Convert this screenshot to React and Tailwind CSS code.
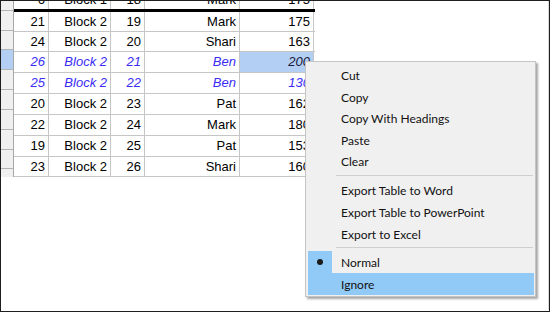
import React from "react";

const rows = [
  { h: "h-[19px]", c: ["21", "Block 2", "19", "Mark", "175"] },
  { h: "h-[19px]", c: ["24", "Block 2", "20", "Shari", "163"] },
  { h: "h-[20px]", c: ["26", "Block 2", "21", "Ben", "200"], sel: true, blue: true },
  { h: "h-[20px]", c: ["25", "Block 2", "22", "Ben", "130"], blue: true },
  { h: "h-[20px]", c: ["20", "Block 2", "23", "Pat", "162"] },
  { h: "h-[20px]", c: ["22", "Block 2", "24", "Mark", "180"] },
  { h: "h-[20px]", c: ["19", "Block 2", "25", "Pat", "153"] },
  { h: "h-[19px]", c: ["23", "Block 2", "26", "Shari", "160"] },
];

const widths = ["w-[35px]", "w-[62px]", "w-[34px]", "w-[95px]", "w-[74px]"];
const headerH = ["h-[20px]", "h-[19px]", "h-[20px]", "h-[20px]", "h-[20px]", "h-[20px]", "h-[20px]", "h-[19px]"];

function Cell({ w, children, className = "" }) {
  return (
    <div
      className={`${w} h-full shrink-0 border-r border-[#c6c6c6] flex items-center justify-end pr-[3px] whitespace-nowrap overflow-hidden ${className}`}
    >
      {children}
    </div>
  );
}

function Table() {
  return (
    <div className="flex -mt-px -ml-px w-[315px] font-['Liberation_Sans',Arial,sans-serif] text-[13px] text-black">
      {/* row header column */}
      <div className="w-[14px] shrink-0 flex flex-col border-r border-[#a8a8a8] bg-[#f0f0f0]">
        <div className="h-[11px] border-b border-[#b4b4b4]" />
        {rows.map((r, i) => (
          <div
            key={i}
            className={`${headerH[i]} border-b border-[#b4b4b4] ${r.sel ? "bg-[#b3cff3]" : ""}`}
          />
        ))}
      </div>
      {/* data */}
      <div className="flex flex-col w-[301px]">
        <div className="h-[9px] overflow-hidden">
          <div className="flex h-[19px] -mt-[10px]">
            {["6", "Block 1", "18", "Mark", "175"].map((t, j) => (
              <Cell key={j} w={widths[j]}>
                {t}
              </Cell>
            ))}
          </div>
        </div>
        <div className="h-[3px] bg-black" />
        {rows.map((r, i) => (
          <div key={i} className={`flex ${r.h} border-b border-[#c6c6c6] box-content`}>
            {r.c.map((t, j) => {
              const selCell = r.sel && j === 4;
              let cls = "";
              if (r.blue) cls = "italic text-[#3a2cf5]";
              if (selCell) cls = "italic text-[#1a1a40] bg-[#b3cff3]";
              return (
                <Cell key={j} w={widths[j]} className={cls}>
                  {t}
                </Cell>
              );
            })}
          </div>
        ))}
      </div>
    </div>
  );
}

function Item({ children, hl, checked, h = "h-[22px]" }) {
  return (
    <div className={`${h} flex items-center ${hl ? "bg-[#91c9f7]" : ""}`}>
      <div
        className={`w-[24px] h-full shrink-0 flex items-center justify-center ${checked ? "bg-[#91c9f7]" : ""}`}
      >
        {checked && <div className="w-[6px] h-[6px] rounded-full bg-[#1a1a1a]" />}
      </div>
      <div className="pl-[9px] pt-[2px] whitespace-nowrap">{children}</div>
    </div>
  );
}

function Sep({ cls }) {
  return (
    <div className={`${cls} pl-[28px] pr-[1px]`}>
      <div className="h-px bg-[#d0d0d0]" />
    </div>
  );
}

function Menu() {
  return (
    <div className="absolute left-[304px] top-[61px] w-[231px] bg-[#f0f0f0] border border-[#c4c4c4] pt-[2px] pb-[1px] pl-[2px] pr-[1px] shadow-[2px_2px_2px_rgba(0,0,0,0.35)] font-['Lato','Noto_Sans',sans-serif] text-[12px] text-[#111] leading-none">
      <Item>Cut</Item>
      <Item h="h-[21px]">Copy</Item>
      <Item>Copy With Headings</Item>
      <Item h="h-[21px]">Paste</Item>
      <Item>Clear</Item>
      <Sep cls="pt-[3px] pb-[3px]" />
      <Item>Export Table to Word</Item>
      <Item>Export Table to PowerPoint</Item>
      <Item>Export to Excel</Item>
      <Sep cls="pt-[2px] pb-[3px]" />
      <Item checked>Normal</Item>
      <Item hl>Ignore</Item>
    </div>
  );
}

export default function App() {
  return (
    <div className="w-[550px] h-[312px] bg-white border border-[#1e1e1e] overflow-hidden">
      <div className="relative w-full h-full border-r border-[#dadada]">
        <Table />
        <Menu />
      </div>
    </div>
  );
}
